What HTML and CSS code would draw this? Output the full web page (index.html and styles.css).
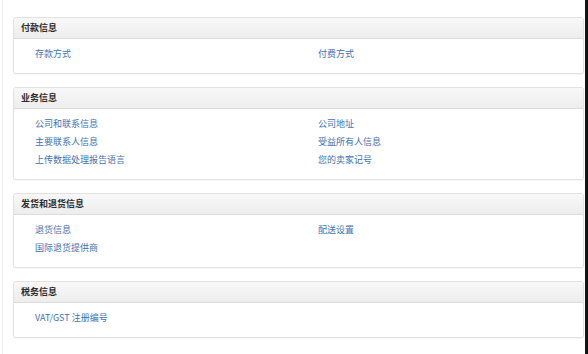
FILE: index.html
```html
<!DOCTYPE html>
<html lang="zh-CN">
<head>
    <meta charset="UTF-8">
    <title>账户信息</title>
    <link rel="stylesheet" href="styles.css">
</head>
<body>
    <div class="page">

        <!-- 付款信息 -->
        <div class="panel">
            <div class="panel-head">付款信息</div>
            <div class="panel-body">
                <a href="#">存款方式</a>
                <a href="#">付费方式</a>
            </div>
        </div>

        <!-- 业务信息 -->
        <div class="panel">
            <div class="panel-head">业务信息</div>
            <div class="panel-body">
                <a href="#">公司和联系信息</a>
                <a href="#">公司地址</a>
                <a href="#">主要联系人信息</a>
                <a href="#">受益所有人信息</a>
                <a href="#">上传数据处理报告语言</a>
                <a href="#">您的卖家记号</a>
            </div>
        </div>

        <!-- 发货和退货信息 -->
        <div class="panel">
            <div class="panel-head">发货和退货信息</div>
            <div class="panel-body">
                <a href="#">退货信息</a>
                <a href="#">配送设置</a>
                <a href="#">国际退货提供商</a>
            </div>
        </div>

        <!-- 税务信息 -->
        <div class="panel">
            <div class="panel-head">税务信息</div>
            <div class="panel-body">
                <a href="#">VAT/GST 注册编号</a>
            </div>
        </div>

    </div>
</body>
</html>
```

FILE: styles.css
```css
body {
    margin: 0;
    background-color: #ffffff;
    font-family: "Noto Sans CJK SC", "Noto Sans", sans-serif;
    font-size: 9px;
}

.page {
    box-sizing: border-box;
    height: 354px;
    margin-left: 2px;
    padding: 17px 1px 0 10px;
    border-left: 1px solid #ececec;
    border-right: 3px solid #141414;
    display: flex;
    flex-direction: column;
    gap: 13px;
    overflow: hidden;
}

/* Panel */
.panel {
    border: 1px solid #e2e2e2;
    border-radius: 3px;
    background-color: #ffffff;
    box-shadow: 0 1px 1px rgba(0, 0, 0, 0.04);
}

.panel-head {
    height: 20px;
    line-height: 20px;
    padding-left: 7px;
    font-weight: bold;
    color: #2b2b2b;
    background: linear-gradient(#f8f8f8, #ededed);
    border-bottom: 1px solid #dcdcdc;
    border-radius: 3px 3px 0 0;
}

.panel-body {
    display: grid;
    grid-template-columns: 283px 1fr;
    padding: 6px 0 10px 21px;
}

.panel-body a {
    line-height: 18px;
    color: #4271b0;
    text-decoration: none;
}
```
